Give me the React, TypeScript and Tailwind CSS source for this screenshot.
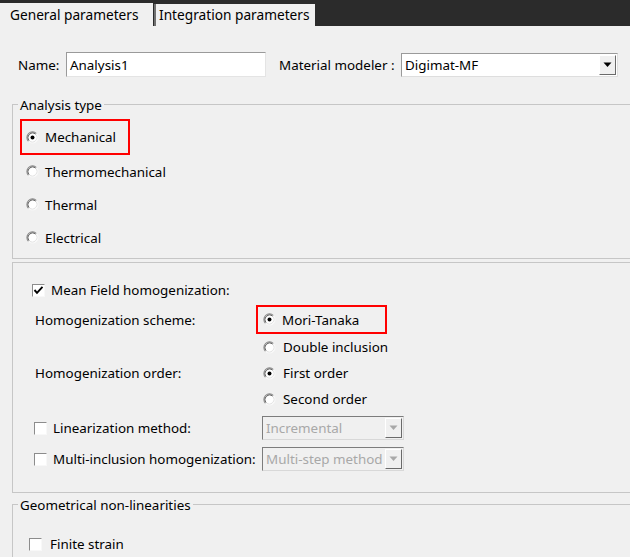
import React from "react";

function Radio({ checked = false }: { checked?: boolean }) {
  return (
    <svg width="13" height="13" viewBox="0 0 13 13" className="shrink-0">
      <circle cx="6.5" cy="6.5" r="5.6" fill="#ffffff" />
      <path d="M 2.54 10.46 A 5.6 5.6 0 0 1 10.46 2.54" stroke="#8a8a8a" strokeWidth="1.1" fill="none" />
      <path d="M 10.46 2.54 A 5.6 5.6 0 0 1 2.54 10.46" stroke="#f8f8f8" strokeWidth="1" fill="none" />
      <path d="M 3.32 9.68 A 4.5 4.5 0 0 1 9.68 3.32" stroke="#5a5a5a" strokeWidth="1" fill="none" />
      <path d="M 9.68 3.32 A 4.5 4.5 0 0 1 3.32 9.68" stroke="#e2e2e2" strokeWidth="1" fill="none" />
      {checked && <circle cx="6.5" cy="6.5" r="2" fill="#000000" />}
    </svg>
  );
}

function Check({ checked = false }: { checked?: boolean }) {
  return (
    <div className="w-[13px] h-[13px] shrink-0 bg-white border border-t-[#8c8c8c] border-l-[#8c8c8c] border-b-[#f8f8f8] border-r-[#f8f8f8] flex items-center justify-center">
      {checked && (
        <svg width="11" height="11" viewBox="0 0 11 11">
          <polyline points="1.5,5 4,7.8 9.5,1.8" stroke="#000" strokeWidth="1.9" fill="none" />
        </svg>
      )}
    </div>
  );
}

function Arrow({ color }: { color: string }) {
  return (
    <svg width="9" height="6" viewBox="0 0 9 6">
      <polygon points="0.5,0.5 8.5,0.5 4.5,5" fill={color} />
    </svg>
  );
}

function T({ children, className = "" }: { children: React.ReactNode; className?: string }) {
  return <span className={"pt-[1px] leading-[17px] whitespace-nowrap " + className}>{children}</span>;
}

function Combo({ text, disabled = false, width }: { text: string; disabled?: boolean; width: string }) {
  return (
    <div
      className={
        "h-[24px] flex items-center border " +
        width +
        (disabled
          ? " bg-[#f0f0f0] border-[#7c7c7c] border-b-[#d8d8d8] border-r-[#d8d8d8] text-[#a8a8a8]"
          : " bg-white border-[#9a9a9a] border-b-[#dedede] border-r-[#dedede] text-black")
      }
    >
      <T className="flex-1 pl-[3px] overflow-hidden">{text}</T>
      <div className="w-[17px] h-[20px] mr-[1px] flex items-center justify-center bg-[#f0f0f0] border border-t-white border-l-white border-b-[#6a6a6a] border-r-[#6a6a6a]">
        <Arrow color={disabled ? "#a8a8a8" : "#000000"} />
      </div>
    </div>
  );
}

export default function App() {
  return (
    <div
      className="w-[630px] h-[557px] bg-[#f0f0f0] overflow-hidden text-[13.4px] text-black"
      style={{ fontFamily: '"Noto Sans", "Open Sans", sans-serif' }}
    >
      {/* tabs */}
      <div className="h-[26px] bg-[#2b2b2b] flex items-end">
        <div className="w-[153px] h-[23px] bg-[#f0f0f0] pl-[10px] flex items-center leading-none text-[13.7px]">
          General parameters
        </div>
        <div className="ml-[1px] w-[161px] h-[22px] bg-[#f0f0f0] border-l-2 border-[#707070] pl-[3px] flex items-center leading-none text-[13.7px]">
          Integration parameters
        </div>
      </div>

      {/* name row */}
      <div className="mt-[26px] h-[25px] flex items-center">
        <T className="pl-[18px] w-[66px]">Name:</T>
        <div className="w-[200px] h-[25px] bg-white border border-[#9a9a9a] border-b-[#e4e4e4] border-r-[#e4e4e4] flex items-center pl-[3px]">
          <T>Analysis1</T>
        </div>
        <T className="ml-[13px] w-[122px]">Material modeler :</T>
        <Combo text="Digimat-MF" width="w-[217px]" />
      </div>

      {/* Analysis type */}
      <fieldset className="mt-[18px] ml-[12px] w-[640px] border border-[#c6c6c6] pb-[4px]">
        <legend className="ml-[5px] px-[2px] leading-[18px] pt-[1px]">Analysis type</legend>
        <div className="mt-[5px] ml-[7px] w-[110px] h-[36px] border-2 border-[#ff0000] flex items-center pl-[4px] gap-[6px]">
          <Radio checked />
          <T>Mechanical</T>
        </div>
        {["Thermomechanical", "Thermal", "Electrical"].map((t) => (
          <div key={t} className="h-[33px] flex items-center pl-[13px] gap-[6px]">
            <Radio />
            <T>{t}</T>
          </div>
        ))}
      </fieldset>

      {/* Mean field */}
      <div className="mt-[3px] ml-[12px] w-[640px] border border-[#c6c6c6] pt-[17px] pb-[21px]">
        <div className="h-[20px] flex items-center pl-[19px] gap-[6px]">
          <Check checked />
          <T>Mean Field homogenization:</T>
        </div>
        <div className="mt-[5px] h-[29px] flex items-center">
          <T className="pl-[22px] w-[243px]">Homogenization scheme:</T>
          <div className="w-[131px] h-[29px] border-2 border-[#ff0000] flex items-center pl-[5px] gap-[6px]">
            <Radio checked />
            <T>Mori-Tanaka</T>
          </div>
        </div>
        <div className="h-[26px] flex items-center">
          <span className="w-[250px]"></span>
          <div className="flex items-center gap-[7px]">
            <Radio />
            <T>Double inclusion</T>
          </div>
        </div>
        <div className="h-[26px] flex items-center">
          <T className="pl-[22px] w-[250px]">Homogenization order:</T>
          <div className="flex items-center gap-[7px]">
            <Radio checked />
            <T>First order</T>
          </div>
        </div>
        <div className="h-[26px] flex items-center">
          <span className="w-[250px]"></span>
          <div className="flex items-center gap-[7px]">
            <Radio />
            <T>Second order</T>
          </div>
        </div>
        <div className="mt-[4px] h-[24px] flex items-center">
          <div className="w-[249px] pl-[21px] flex items-center gap-[6px]">
            <Check />
            <T>Linearization method:</T>
          </div>
          <Combo text="Incremental" disabled width="w-[142px]" />
        </div>
        <div className="mt-[7px] h-[24px] flex items-center">
          <div className="w-[249px] pl-[21px] flex items-center gap-[6px]">
            <Check />
            <T>Multi-inclusion homogenization:</T>
          </div>
          <Combo text="Multi-step method" disabled width="w-[142px]" />
        </div>
      </div>

      {/* Geometrical */}
      <fieldset className="mt-[2px] ml-[12px] w-[640px] border border-[#c6c6c6] pb-[20px]">
        <legend className="ml-[5px] px-[2px] leading-[18px] pt-[1px]">Geometrical non-linearities</legend>
        <div className="mt-[20px] h-[20px] flex items-center pl-[16px] gap-[8px]">
          <Check />
          <T>Finite strain</T>
        </div>
      </fieldset>
    </div>
  );
}
